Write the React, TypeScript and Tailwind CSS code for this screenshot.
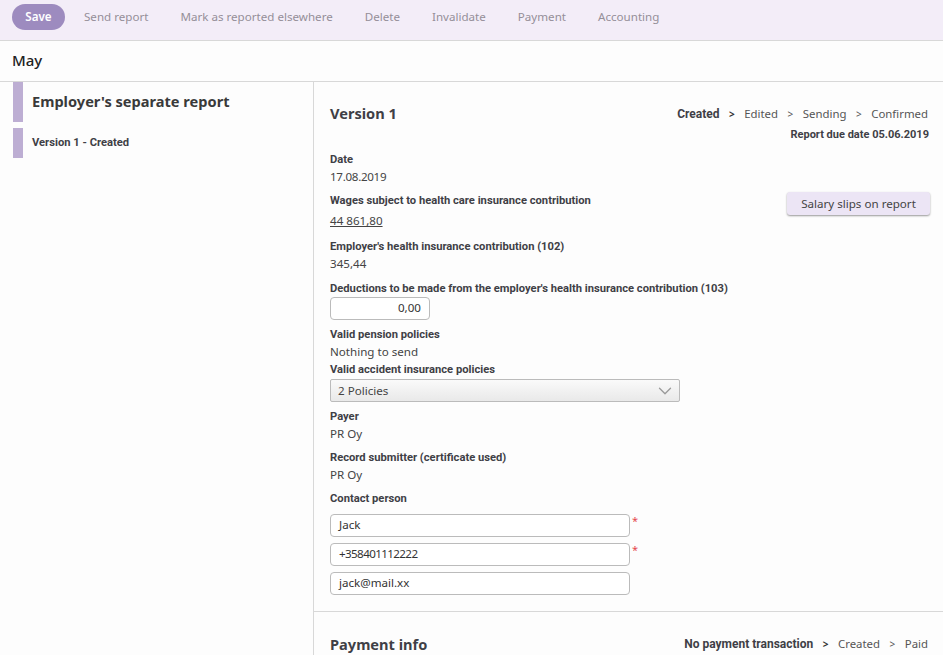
import React from 'react';
import { ChevronDown } from 'lucide-react';

const toolbarItems = ['Send report', 'Mark as reported elsewhere', 'Delete', 'Invalidate', 'Payment', 'Accounting'];

const Label = ({ children, className = '' }: { children: React.ReactNode; className?: string }) => (
  <div className={`font-['Roboto',sans-serif] text-[11.2px] leading-[18px] font-bold text-[#3f3f46] ${className}`}>{children}</div>
);

const Value = ({ children, className = '' }: { children: React.ReactNode; className?: string }) => (
  <div className={`text-[11.6px] leading-[18px] text-[#444] ${className}`}>{children}</div>
);

const TextBox = ({ value, required, className = '' }: { value: string; required?: boolean; className?: string }) => (
  <div className="flex items-start">
    <div className={`w-[300px] h-[23px] px-2 bg-white border border-[#bbb] rounded-[4px] text-[11.6px] leading-[20px] text-[#333] ${className}`}>
      {value}
    </div>
    {required && <span className="ml-[2px] text-[11px] leading-[14px] text-[#e5484d]">*</span>}
  </div>
);

const Steps = ({ steps }: { steps: string[] }) => (
  <div className="flex items-center pr-[2px] text-[11.4px] text-[#555]">
    {steps.map((step, i) => (
      <React.Fragment key={step}>
        {i > 0 && <span className={`mx-[9.5px] text-[10px] ${i === 1 ? 'font-bold text-[#333]' : ''}`}>&gt;</span>}
        <span className={i === 0 ? "font-['Roboto',sans-serif] font-bold text-[12px] text-[#3f3f46]" : ''}>{step}</span>
      </React.Fragment>
    ))}
  </div>
);

export default function App() {
  return (
    <div className="h-[655px] overflow-hidden bg-[#fdfdfd] font-['Noto_Sans',sans-serif]">
      {/* Toolbar */}
      <div className="h-[41px] bg-[#f3edf8] border-b border-[#d8d8d8] flex items-center pl-3 pb-[6px]">
        <div className="w-[53px] h-[26px] rounded-full bg-[#9d8bbf] text-white text-[11.6px] font-semibold flex items-center justify-center">
          Save
        </div>
        <div className="flex gap-8 ml-[19px] text-[11.6px] text-[#958f98]">
          {toolbarItems.map((item) => (
            <span key={item}>{item}</span>
          ))}
        </div>
      </div>

      {/* Title */}
      <div className="h-[41px] border-b border-[#d8d8d8] flex items-center pl-3 pb-[2px] text-[15px] font-medium text-[#222]">
        May
      </div>

      <div className="flex h-[573px]">
        {/* Side list */}
        <div className="w-[314px] shrink-0 border-r border-[#d8d8d8] pl-[13px]">
          <div className="flex h-[40px]">
            <div className="w-[10px] bg-[#bdaed3]" />
            <div className="pl-[9px] pt-[7px] text-[14.6px] leading-[24px] font-bold text-[#3a3a3a]">Employer's separate report</div>
          </div>
          <div className="flex h-[30px] mt-[6px]">
            <div className="w-[10px] bg-[#bdaed3]" />
            <Label className="pl-[9px] leading-[30px]">Version 1 - Created</Label>
          </div>
        </div>

        {/* Main */}
        <div className="flex-1">
          <div className="pl-4 pr-[13px] pt-[21px] pb-[16px] border-b border-[#d8d8d8]">
            <div className="flex justify-between items-center h-[22px]">
              <div className="text-[14.6px] font-bold text-[#3f3f46]">Version 1</div>
              <Steps steps={['Created', 'Edited', 'Sending', 'Confirmed']} />
            </div>
            <Label className="text-right mt-[1px] pr-px text-[11px]">Report due date 05.06.2019</Label>

            <Label className="mt-[7px]">Date</Label>
            <Value className="-mt-px tracking-[-0.3px]">17.08.2019</Value>

            <div className="flex justify-between items-start mt-[6px]">
              <div>
                <Label>Wages subject to health care insurance contribution</Label>
                <Value className="underline mt-[2px]">44 861,80</Value>
              </div>
              <div className="h-[23px] w-[143px] flex items-center justify-center bg-[#ece5f5] rounded-[3px] shadow-[0_1px_2px_rgba(0,0,0,0.4)] text-[11.6px] text-[#444]">
                Salary slips on report
              </div>
            </div>

            <Label className="mt-[8px]">Employer's health insurance contribution (102)</Label>
            <Value className="-mt-px">345,44</Value>

            <Label className="mt-[7px] -mb-px">Deductions to be made from the employer's health insurance contribution (103)</Label>
            <div className="w-[100px] h-[23px] px-2 bg-white border border-[#bbb] rounded-[4px] text-right text-[11.6px] leading-[20px] text-[#333]">0,00</div>

            <Label className="mt-[6px] -mb-px">Valid pension policies</Label>
            <Value>Nothing to send</Value>
            <Label>Valid accident insurance policies</Label>
            <div className="w-[350px] h-[23px] pl-[7px] pr-[3px] flex items-center justify-between border border-[#bbb] rounded-[2px] bg-gradient-to-b from-[#fafafa] to-[#e9e9e9] text-[11.6px] text-[#444]">
              2 Policies
              <ChevronDown size={22} strokeWidth={1.4} className="text-[#999]" />
            </div>

            <Label className="mt-[6px] -mb-px">Payer</Label>
            <Value>PR Oy</Value>
            <Label className="mt-[6px] -mb-px">Record submitter (certificate used)</Label>
            <Value>PR Oy</Value>
            <Label className="mt-[6px] -mb-px">Contact person</Label>

            <div className="flex flex-col gap-[6px] mt-[7px]">
              <TextBox value="Jack" required />
              <TextBox value="+358401112222" required className="tracking-[-0.6px]" />
              <TextBox value="jack@mail.xx" />
            </div>
          </div>

          <div className="pl-4 pr-[13px] pt-[22px]">
            <div className="flex justify-between items-center h-[20px]">
              <div className="text-[14.6px] leading-[20px] font-bold text-[#3f3f46]">Payment info</div>
              <Steps steps={['No payment transaction', 'Created', 'Paid']} />
            </div>
          </div>
        </div>
      </div>
    </div>
  );
}
